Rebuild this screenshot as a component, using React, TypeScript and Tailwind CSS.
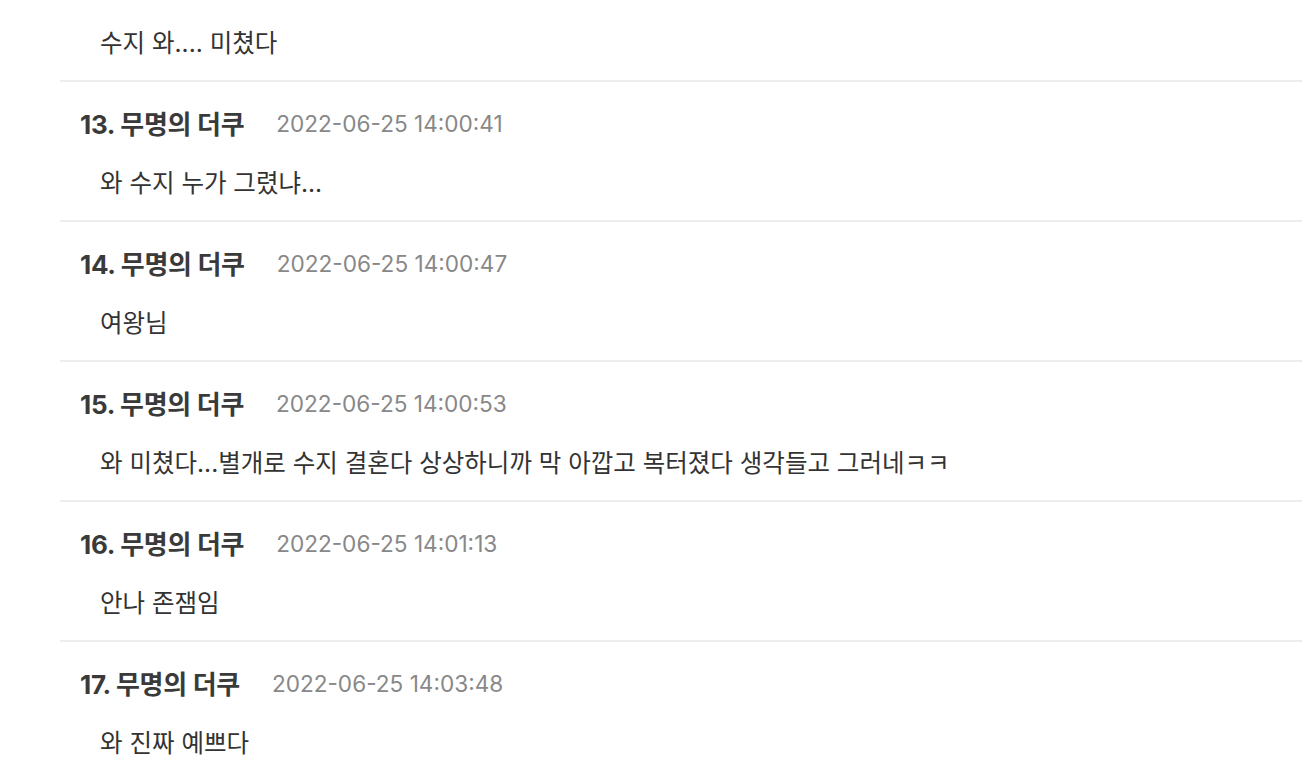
import React from "react";

const comments = [
  { n: 13, time: "2022-06-25 14:00:41", body: "와 수지 누가 그렸냐..." },
  { n: 14, time: "2022-06-25 14:00:47", body: "여왕님" },
  { n: 15, time: "2022-06-25 14:00:53", body: "와 미쳤다...별개로 수지 결혼다 상상하니까 막 아깝고 복터졌다 생각들고 그러네ㅋㅋ" },
  { n: 16, time: "2022-06-25 14:01:13", body: "안나 존잼임" },
  { n: 17, time: "2022-06-25 14:03:48", body: "와 진짜 예쁘다" },
];

export default function App() {
  return (
    <div
      className="w-[1302px] h-[776px] overflow-hidden bg-white pl-[60px]"
      style={{ fontFamily: "Inter, 'Noto Sans CJK KR', sans-serif" }}
    >
      <div className="px-[20px] pt-[27px] pb-[21px]">
        <div className="pl-[20px] h-[32px] leading-[32px] text-[24.5px] text-[#333] whitespace-nowrap">수지 와.... 미쳤다</div>
      </div>
      {comments.map((c) => (
        <div key={c.n} className="border-t-2 border-[#ededed] px-[20px] pt-[26px] pb-[21px]">
          <div className="flex items-center h-[32px] gap-[32px] whitespace-nowrap">
            <span className="text-[26px] font-bold text-[#3a3a3a] tracking-[-0.3px]">
              {c.n}. 무명의 더쿠
            </span>
            <span className="text-[22.6px] text-[#888]">{c.time}</span>
          </div>
          <div className="mt-[27px] pl-[20px] h-[32px] leading-[32px] text-[24.5px] text-[#333] whitespace-nowrap">{c.body}</div>
        </div>
      ))}
    </div>
  );
}
